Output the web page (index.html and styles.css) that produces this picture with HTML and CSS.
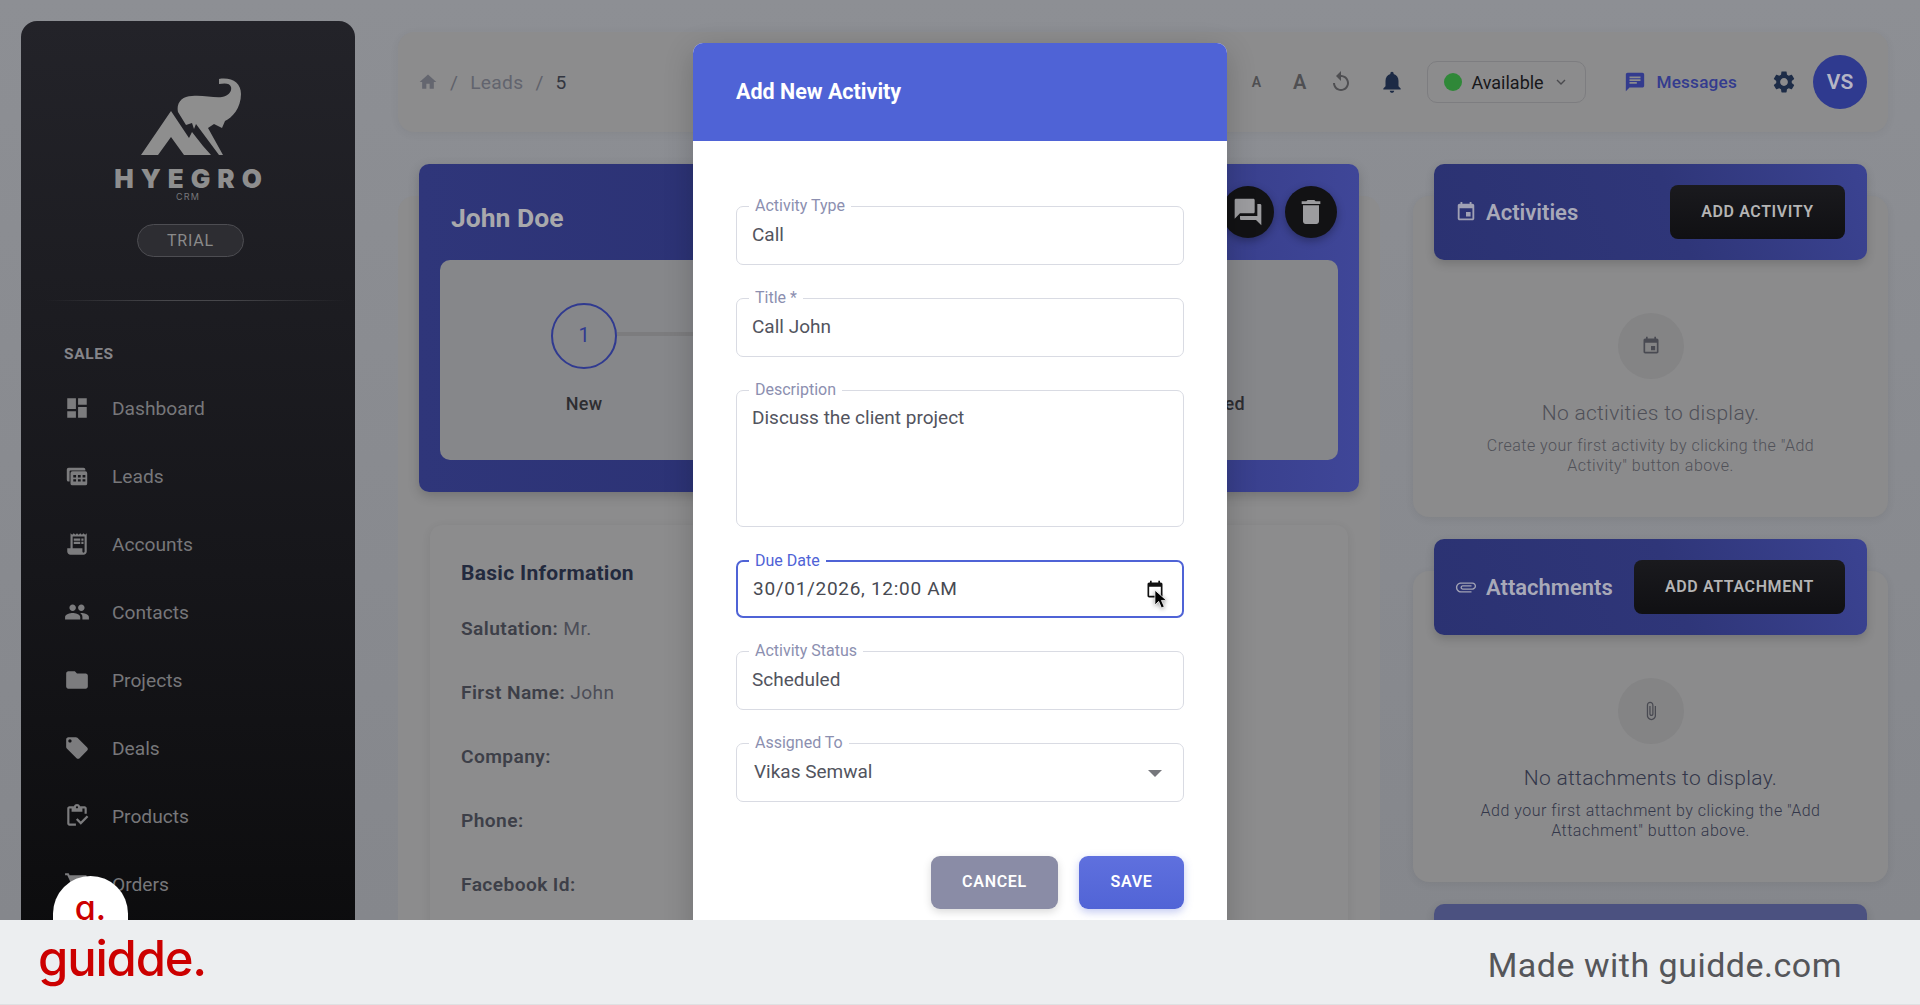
FILE: index.html
```html
<!DOCTYPE html>
<html lang="en">
<head>
<meta charset="utf-8">
<title>Add New Activity</title>
<link rel="stylesheet" href="styles.css">
</head>
<body>
<div class="app">
  <aside class="sidebar">
    <svg class="logo-mark" viewBox="140 78 102 78"><path d="M141 155 171 111 189 138 192 132 203 146 211 155H184L171 137 158 155Z"/><path d="M178 112C176 103 182 96 192 96 203 95 214 98 222 97 229 96 232 91 231 87 230 83 225 83 219 84L219 79C232 77 241 83 241 94 241 108 232 118 225 121L222 128 214 124 208 128 223 155H219L196 124 194 129 192 123 186 125Z"/></svg>
    <div class="logo-name">HYEGRO</div>
    <div class="logo-sub">CRM</div>
    <div class="trial">TRIAL</div>
    <div class="divider"></div>
    <div class="nav-head">SALES</div>
    <nav class="nav">
      <a class="nav-item"><svg viewBox="0 0 24 24"><path d="M3 13h8V3H3v10zm0 8h8v-6H3v6zm10 0h8V11h-8v10zm0-18v6h8V3h-8z"/></svg><span>Dashboard</span></a>
      <a class="nav-item"><svg viewBox="-2 -2 28 28"><path d="M4 3h15a2 2 0 0 1 2 2v1H5a1 1 0 0 0-1 1v11H3a2 2 0 0 1-2-2V5a2 2 0 0 1 2-2z"/><path fill-rule="evenodd" d="M7 7h14a2 2 0 0 1 2 2v11a2 2 0 0 1-2 2H7a2 2 0 0 1-2-2V9a2 2 0 0 1 2-2zm1 4v2.500h3V11H8zm5 0v2.500h3V11h-3zm5 0v2.500h3V11h-3zM8 15.500V18h3v-2.500H8zm5 0V18h3v-2.500h-3zm5 0V18h3v-2.500h-3z"/></svg><span>Leads</span></a>
      <a class="nav-item"><svg viewBox="0 0 24 24"><path d="M19.500 3.500 18 2l-1.500 1.500L15 2l-1.500 1.500L12 2l-1.500 1.500L9 2 7.500 3.500 6 2v14H3v3c0 1.660 1.340 3 3 3h12c1.660 0 3-1.340 3-3V2l-1.500 1.500zM19 19c0 .550-.450 1-1 1s-1-.450-1-1v-3H8V5h11v14z"/><path d="M9 7h6v2H9zm7 0h2v2h-2zm-7 3h6v2H9zm7 0h2v2h-2z"/></svg><span>Accounts</span></a>
      <a class="nav-item"><svg viewBox="0 0 24 24"><path d="M16 11c1.660 0 2.990-1.340 2.990-3S17.660 5 16 5c-1.660 0-3 1.340-3 3s1.340 3 3 3zm-8 0c1.660 0 2.990-1.340 2.990-3S9.660 5 8 5C6.340 5 5 6.340 5 8s1.340 3 3 3zm0 2c-2.330 0-7 1.170-7 3.500V19h14v-2.500c0-2.330-4.670-3.500-7-3.500zm8 0c-.290 0-.620.020-.970.050 1.160.840 1.970 1.970 1.970 3.450V19h6v-2.500c0-2.330-4.670-3.500-7-3.500z"/></svg><span>Contacts</span></a>
      <a class="nav-item"><svg viewBox="0 0 24 24"><path d="M10 4H4c-1.100 0-1.990.900-1.990 2L2 18c0 1.100.900 2 2 2h16c1.100 0 2-.900 2-2V8c0-1.100-.900-2-2-2h-8l-2-2z"/></svg><span>Projects</span></a>
      <a class="nav-item"><svg viewBox="0 0 24 24"><path d="M21.410 11.580l-9-9C12.050 2.220 11.550 2 11 2H4c-1.100 0-2 .900-2 2v7c0 .550.220 1.050.590 1.420l9 9c.360.360.860.580 1.410.580.550 0 1.050-.220 1.410-.590l7-7c.370-.360.590-.860.590-1.410 0-.550-.230-1.060-.590-1.420zM5.500 7C4.670 7 4 6.330 4 5.500S4.670 4 5.500 4 7 4.670 7 5.500 6.330 7 5.500 7z"/></svg><span>Deals</span></a>
      <a class="nav-item"><svg viewBox="0 0 24 24"><path d="M5 5h2v3h10V5h2v5h2V5c0-1.100-.900-2-2-2h-4.180C14.400 1.840 13.300 1 12 1s-2.400.840-2.820 2H5c-1.100 0-2 .900-2 2v14c0 1.100.900 2 2 2h6v-2H5V5zm7-2c.550 0 1 .450 1 1s-.450 1-1 1-1-.450-1-1 .450-1 1-1z"/><path d="M21 11.500 15.510 17l-3.010-3-1.500 1.500 4.510 4.500 6.990-7z"/></svg><span>Products</span></a>
      <a class="nav-item"><svg viewBox="0 0 24 24"><path d="M7 18c-1.100 0-1.990.900-1.990 2S5.900 22 7 22s2-.900 2-2-.900-2-2-2zM1 2v2h2l3.600 7.590-1.350 2.450c-.160.280-.250.610-.250.960 0 1.100.900 2 2 2h12v-2H7.420c-.140 0-.250-.110-.250-.250l.030-.120.900-1.630h7.450c.750 0 1.410-.410 1.750-1.030l3.580-6.490c.080-.140.120-.310.120-.480 0-.550-.450-1-1-1H5.210l-.940-2H1zm16 16c-1.100 0-1.990.900-1.990 2s.890 2 1.990 2 2-.900 2-2-.900-2-2-2z"/></svg><span>Orders</span></a>
    </nav>
  </aside>

  <main class="content">
    <header class="topbar">
      <div class="crumbs">
        <svg class="crumb-home" viewBox="0 0 24 24"><path d="M10 20v-6h4v6h5v-8h3L12 3 2 12h3v8z"/></svg>
        <span class="crumb-sep">/</span><span class="crumb-link">Leads</span><span class="crumb-sep">/</span><span class="crumb-cur">5</span>
      </div>
      <div class="tools">
        <span class="font-a small">A</span>
        <span class="font-a big">A</span>
        <svg class="tool-icon replay" viewBox="0 0 24 24"><path d="M12 5V1L7 6l5 5V7c3.310 0 6 2.690 6 6s-2.690 6-6 6-6-2.690-6-6H4c0 4.420 3.580 8 8 8s8-3.580 8-8-3.580-8-8-8z"/></svg>
        <svg class="tool-icon bell" viewBox="0 0 24 24"><path d="M12 22c1.100 0 2-.900 2-2h-4c0 1.100.890 2 2 2zm6-6v-5c0-3.070-1.640-5.640-4.500-6.320V4c0-.830-.670-1.500-1.500-1.500s-1.500.670-1.500 1.500v.680C7.630 5.360 6 7.920 6 11v5l-2 2v1h16v-1l-2-2z"/></svg>
        <div class="status"><i class="dot"></i><span>Available</span><svg class="chev" viewBox="0 0 24 24"><path d="M6 9l6 6 6-6" fill="none" stroke="currentColor" stroke-width="2"/></svg></div>
        <div class="messages"><svg viewBox="0 0 24 24"><path d="M20 2H4c-1.100 0-1.990.900-1.990 2L2 22l4-4h14c1.100 0 2-.900 2-2V4c0-1.100-.900-2-2-2zM6 9h12v2H6V9zm8 5H6v-2h8v2zm4-6H6V6h12v2z"/></svg><span>Messages</span></div>
        <svg class="tool-icon gear" viewBox="0 0 24 24"><path d="M19.140 12.940c.040-.300.060-.610.060-.940 0-.320-.020-.640-.070-.940l2.030-1.580c.180-.140.230-.410.120-.610l-1.920-3.320c-.120-.220-.370-.290-.590-.220l-2.390.960c-.500-.380-1.030-.700-1.620-.940l-.360-2.540c-.040-.240-.240-.410-.480-.410h-3.840c-.240 0-.430.170-.470.410l-.360 2.540c-.590.240-1.130.570-1.620.940l-2.390-.960c-.220-.080-.470 0-.590.220L2.740 8.870c-.120.210-.080.470.120.610l2.030 1.580c-.050.300-.090.630-.090.940s.020.640.070.940l-2.030 1.580c-.180.140-.230.410-.120.610l1.920 3.320c.120.220.370.290.590.220l2.390-.960c.500.380 1.030.700 1.620.940l.360 2.540c.050.240.240.410.480.410h3.840c.240 0 .440-.170.470-.410l.360-2.540c.590-.240 1.130-.560 1.620-.940l2.390.960c.220.080.470 0 .590-.220l1.920-3.320c.120-.220.070-.470-.120-.610l-2.010-1.580zM12 15.600c-1.980 0-3.600-1.620-3.600-3.600s1.620-3.600 3.600-3.600 3.600 1.620 3.600 3.600-1.620 3.600-3.600 3.600z"/></svg>
        <div class="avatar">VS</div>
      </div>
    </header>

    <div class="columns">
      <section class="lead-card">
        <div class="lead-head">
          <div class="lead-title">
            <h1>John Doe</h1>
            <div class="lead-actions">
              <span class="round"><svg viewBox="0 0 24 24"><path d="M21 6h-2v9H6v2c0 .550.450 1 1 1h11l4 4V7c0-.550-.450-1-1-1zm-4 6V3c0-.550-.450-1-1-1H3c-.550 0-1 .450-1 1v14l4-4h10c.550 0 1-.450 1-1z"/></svg></span>
              <span class="round"><svg viewBox="0 0 24 24"><path d="M6 19c0 1.100.900 2 2 2h8c1.100 0 2-.900 2-2V7H6v12zM19 4h-3.500l-1-1h-5l-1 1H5v2h14V4z"/></svg></span>
            </div>
          </div>
          <div class="stepper">
            <div class="step"><div class="step-num">1</div><div class="step-label">New</div></div>
            <div class="step-line"></div>
            <div class="step end"><div class="step-label">Closed</div></div>
          </div>
        </div>
        <div class="info-card">
          <h2>Basic Information</h2>
          <p><b>Salutation:</b> Mr.</p>
          <p><b>First Name:</b> John</p>
          <p><b>Company:</b></p>
          <p><b>Phone:</b></p>
          <p><b>Facebook Id:</b></p>
        </div>
      </section>

      <section class="side">
        <div class="panel first">
          <div class="panel-head">
            <div class="panel-title"><svg viewBox="0 0 24 24"><path d="M17 12h-5v5h5v-5zM16 1v2H8V1H6v2H5c-1.110 0-1.990.900-1.990 2L3 19c0 1.100.890 2 2 2h14c1.100 0 2-.900 2-2V5c0-1.100-.900-2-2-2h-1V1h-2zm3 18H5V8h14v11z"/></svg><span>Activities</span></div>
            <button class="dark-btn wide-a">ADD ACTIVITY</button>
          </div>
          <div class="empty">
            <div class="empty-icon"><svg viewBox="0 0 24 24"><path d="M17 12h-5v5h5v-5zM16 1v2H8V1H6v2H5c-1.110 0-1.990.900-1.990 2L3 19c0 1.100.890 2 2 2h14c1.100 0 2-.900 2-2V5c0-1.100-.900-2-2-2h-1V1h-2zm3 18H5V8h14v11z"/></svg></div>
            <h3>No activities to display.</h3>
            <p>Create your first activity by clicking the "Add Activity" button above.</p>
          </div>
        </div>
        <div class="panel second">
          <div class="panel-head">
            <div class="panel-title"><svg class="clip-h" viewBox="0 0 24 24"><path d="M16.500 6v11.500c0 2.210-1.790 4-4 4s-4-1.790-4-4V5c0-1.380 1.120-2.500 2.500-2.500s2.500 1.120 2.500 2.500v10.500c0 .550-.450 1-1 1s-1-.450-1-1V6H10v9.500c0 1.380 1.120 2.500 2.500 2.500s2.500-1.120 2.500-2.500V5c0-2.210-1.790-4-4-4S7 2.790 7 5v12.500c0 3.040 2.460 5.500 5.500 5.500s5.500-2.460 5.500-5.500V6h-1.500z"/></svg><span>Attachments</span></div>
            <button class="dark-btn wide-b">ADD ATTACHMENT</button>
          </div>
          <div class="empty">
            <div class="empty-icon"><svg viewBox="0 0 24 24"><path d="M16.500 6v11.500c0 2.210-1.790 4-4 4s-4-1.790-4-4V5c0-1.380 1.120-2.500 2.500-2.500s2.500 1.120 2.500 2.500v10.500c0 .550-.450 1-1 1s-1-.450-1-1V6H10v9.500c0 1.380 1.120 2.500 2.500 2.500s2.500-1.120 2.500-2.500V5c0-2.210-1.790-4-4-4S7 2.790 7 5v12.500c0 3.040 2.460 5.500 5.500 5.500s5.500-2.460 5.500-5.500V6h-1.500z"/></svg></div>
            <h3 class="strong">No attachments to display.</h3>
            <p class="strong">Add your first attachment by clicking the "Add Attachment" button above.</p>
          </div>
        </div>
        <div class="panel third"><div class="panel-head faded"></div></div>
      </section>
    </div>
  </main>

  <div class="modal">
    <div class="modal-head">Add New Activity</div>
    <div class="modal-body">
      <div class="field"><label>Activity Type</label><div class="value">Call</div></div>
      <div class="field"><label>Title *</label><div class="value">Call John</div></div>
      <div class="field area"><label>Description</label><div class="value">Discuss the client project</div></div>
      <div class="field focus"><label>Due Date</label><div class="value date">30/01/2026, 12:00 AM</div>
        <svg class="cal" viewBox="0 0 24 24"><path d="M16 1v2H8V1H6v2H5c-1.110 0-1.990.900-1.990 2L3 19c0 1.100.890 2 2 2h14c1.100 0 2-.900 2-2V5c0-1.100-.900-2-2-2h-1V1h-2zm3 18H5V8h14v11z"/></svg>
        <svg class="cursor" viewBox="0 0 14 22"><path d="M1 1v16l4-4 3 7 3-1.300-3-6.700h5.500z" stroke="#fff" stroke-width=".8"/></svg>
      </div>
      <div class="field"><label>Activity Status</label><div class="value">Scheduled</div></div>
      <div class="field select"><label>Assigned To</label><div class="value sel">Vikas Semwal</div><i class="caret"></i></div>
      <div class="modal-actions">
        <button class="btn cancel">CANCEL</button>
        <button class="btn save">SAVE</button>
      </div>
    </div>
  </div>
</div>

<footer class="footer">
  <div class="bubble"><span>a.</span></div>
  <div class="brand">guidde.</div>
  <div class="made">Made with guidde.com</div>
</footer>
</body>
</html>
```
FILE: styles.css
```css
* { box-sizing: border-box; }
html, body { margin: 0; height: 100%; }
body {
  width: 1920px;
  height: 1005px;
  overflow: hidden;
  font-family: Roboto, "Liberation Sans", sans-serif;
  background: #eceef0;
}
h1, h2, h3, p { margin: 0; }

.app {
  position: relative;
  display: flex;
  height: 920px;
  overflow: hidden;
  background: linear-gradient(180deg, #8d8f94 0%, #85878c 100%);
}

/* sidebar */
.sidebar {
  flex: none;
  width: 334px;
  height: 1000px;
  margin: 21px 0 0 21px;
  padding-top: 57px;
  border-radius: 16px;
  background: linear-gradient(180deg, #232329 0%, #16161a 55%, #0a0a0b 100%);
  display: flex;
  flex-direction: column;
  align-items: center;
}
.logo-mark { display: block; width: 102px; height: 78px; fill: #8e8e8e; margin-left: 6px; }
.logo-name {
  margin-top: 8px;
  font: 900 26px/30px Inter, "Liberation Sans", sans-serif;
  letter-spacing: 7px;
  color: #8e8e8e;
  padding-left: 7px;
}
.logo-sub {
  margin-top: -3px;
  font: 400 9px/12px Inter, sans-serif;
  letter-spacing: 1.2px;
  color: #77777a;
}
.trial {
  margin: 21px 0 0 5px;
  width: 107px;
  height: 33px;
  border: 1px solid #4d4d52;
  border-radius: 17px;
  background: #2d2d32;
  color: #8a8a8a;
  font-size: 16px;
  line-height: 31px;
  text-align: center;
  letter-spacing: .8px;
}
.divider {
  align-self: flex-start;
  margin: 43px 0 0 23px;
  width: 303px;
  height: 1px;
  background: linear-gradient(90deg, transparent, #47474b 40%, #47474b 60%, transparent);
}
.nav-head {
  align-self: flex-start;
  margin: 44px 0 0 43px;
  font-size: 15.5px;
  line-height: 18px;
  font-weight: 700;
  letter-spacing: .6px;
  color: #85858a;
}
.nav { align-self: stretch; margin-top: 11px; }
.nav-item {
  display: flex;
  align-items: center;
  height: 68px;
  padding-left: 42px;
  gap: 21px;
  color: #77777a;
  font-size: 19.2px;
}
.nav-item svg { flex: none; width: 28px; height: 28px; fill: #7c7c7e; padding: 1px; }

/* main */
.content { flex: none; width: 1490px; margin: 32px 0 0 43px; }
.topbar {
  display: flex;
  align-items: center;
  justify-content: space-between;
  height: 100px;
  padding: 0 21px 0 20px;
  border-radius: 16px;
  background: #8c8c8d;
  box-shadow: 0 2px 10px rgba(0,0,0,.05);
}
.crumbs { display: flex; align-items: center; font-size: 19.2px; letter-spacing: .3px; }
.crumb-home { width: 20px; height: 20px; fill: #64666f; margin-right: 12px; }
.crumb-sep { color: #5f616a; margin-right: 12px; }
.crumb-link { color: #62646e; margin-right: 12px; }
.crumb-cur { color: #333640; }
.tools { display: flex; align-items: center; }
.font-a { font-weight: 600; color: #4f4f52; }
.font-a.small { font-size: 14px; margin-right: 32px; }
.font-a.big { font-size: 20px; margin-right: 23px; }
.tool-icon { width: 24px; height: 24px; }
.replay { fill: #4f4f52; margin-right: 26px; }
.bell { fill: #1c2a45; width: 26px; height: 26px; margin-right: 22px; }
.status {
  display: flex;
  align-items: center;
  width: 159px;
  height: 42px;
  padding-left: 16px;
  border: 1.5px solid #7d7d80;
  border-radius: 10px;
  font-size: 18px;
  color: #17171a;
}
.dot { width: 18px; height: 18px; border-radius: 50%; background: #2f8838; margin-right: 9px; }
.chev { width: 16px; height: 16px; margin-left: 9px; color: #4a4a4e; }
.messages {
  display: flex;
  align-items: center;
  margin-left: 38px;
  margin-right: 34px;
  color: #333b8e;
  font-size: 17.2px;
  font-weight: 500;
  letter-spacing: .2px;
}
.messages svg { width: 22px; height: 22px; fill: #333b8e; margin-right: 10px; }
.gear { fill: #1d2c47; width: 26px; height: 26px; margin-right: 16px; }
.avatar {
  width: 54px;
  height: 54px;
  border-radius: 50%;
  background: #2f3a8f;
  color: #b5b5c5;
  font-size: 21px;
  font-weight: 600;
  line-height: 54px;
  text-align: center;
}

.columns { display: flex; gap: 33px; margin-top: 64px; }

/* lead */
.lead-card {
  flex: none;
  width: 982px;
  height: 800px;
  padding: 0 21px;
  border-radius: 16px;
  background: #8c8c8d;
}
.lead-head {
  margin-top: -32px;
  height: 328px;
  padding: 0 21px;
  border-radius: 10px;
  background: linear-gradient(90deg, #2f367a 0%, #2a3072 55%, #3f4698 100%);
  box-shadow: 0 4px 12px rgba(0,0,0,.18);
}
.lead-title { display: flex; align-items: center; justify-content: space-between; height: 96px; padding: 0 1px 0 11px; }
.lead-title h1 { margin-top: 10px; font-size: 26.5px; font-weight: 700; color: #a9a9ac; }
.lead-actions { display: flex; gap: 11px; margin-top: -1px; }
.round {
  display: flex;
  align-items: center;
  justify-content: center;
  width: 52px;
  height: 52px;
  border-radius: 50%;
  background: #121214;
  box-shadow: 0 3px 8px rgba(0,0,0,.3);
}
.round svg { width: 32px; height: 32px; fill: #9c9c9f; }
.stepper {
  display: flex;
  align-items: flex-start;
  height: 200px;
  padding: 43px 93px 0 111px;
  border-radius: 10px;
  background: #86878a;
}
.step { flex: none; text-align: center; width: 66px; }
.step.end { width: 60px; text-align: right; padding-top: 90px; }
.step-num {
  width: 66px;
  height: 66px;
  border: 2.5px solid #303a90;
  border-radius: 50%;
  color: #303a90;
  font-size: 20px;
  line-height: 61px;
}
.step-label { margin-top: 24px; font-size: 18px; font-weight: 500; letter-spacing: .3px; color: #2d2d31; white-space: nowrap; }
.step.end .step-label { margin-top: 0; }
.step-line { flex: 1; height: 4px; margin-top: 29px; background: #7c7c7e; }
.info-card {
  margin: 33px 11px 0;
  height: 500px;
  padding: 36px 31px;
  border-radius: 12px;
  background: #8c8c8d;
  box-shadow: 0 2px 10px rgba(0,0,0,.08);
  color: #4c4e58;
  font-size: 19.2px;
  letter-spacing: .4px;
}
.info-card h2 { font-size: 21px; line-height: 24px; font-weight: 700; letter-spacing: .3px; color: #232a3e; margin-bottom: 32px; }
.info-card p { height: 64px; line-height: 24px; }
.info-card b { font-weight: 600; color: #3d3f48; }

/* right */
.side { flex: none; width: 475px; display: flex; flex-direction: column; gap: 54px; }
.panel { padding: 0 21px; border-radius: 16px; background: #8b8b8c; box-shadow: 0 2px 8px rgba(0,0,0,.07); }
.panel.first { height: 321px; }
.panel.second { height: 311px; }
.panel.third { height: 200px; }
.panel-head {
  display: flex;
  align-items: center;
  justify-content: space-between;
  height: 96px;
  padding: 0 22px 0 21px;
  position: relative;
  top: -32px;
  margin-bottom: -32px;
  border-radius: 10px;
  background: linear-gradient(70deg, #2b3272 0%, #2f3679 55%, #3b4392 100%);
  box-shadow: 0 4px 10px rgba(0,0,0,.16);
}
.panel-head.faded { background: #4b5180; }
.panel-title { display: flex; align-items: center; gap: 9px; color: #a8a9b8; font-size: 22px; font-weight: 600; }
.panel-title svg { width: 22px; height: 22px; fill: #a0a1b4; }
.panel-title .clip-h { transform: rotate(90deg); }
.dark-btn {
  height: 54px;
  border: 0;
  border-radius: 8px;
  background: linear-gradient(180deg, #1a1a1e 0%, #101013 100%);
  color: #b4b4b4;
  font: 600 16px/1 Roboto, sans-serif;
  letter-spacing: .6px;
}
.wide-a { width: 175px; }
.wide-b { width: 211px; }
.empty { text-align: center; color: #55565c; }
.first .empty { padding-top: 53px; }
.second .empty { padding-top: 43px; }
.empty-icon {
  display: flex;
  align-items: center;
  justify-content: center;
  width: 66px;
  height: 66px;
  margin: 0 auto;
  border-radius: 50%;
  background: #848485;
}
.empty-icon svg { width: 20px; height: 20px; fill: #494a52; }
.empty h3 { margin-top: 20px; font-size: 21px; line-height: 28px; font-weight: 300; letter-spacing: .3px; color: #4f5058; }
.empty p { width: 350px; margin: 9px auto 0; font-size: 16px; line-height: 20px; font-weight: 300; letter-spacing: .5px; color: #505158; }
.empty .strong { color: #33374a; }

/* modal */
.modal {
  position: absolute;
  left: 693px;
  top: 43px;
  width: 534px;
  height: 900px;
  border-radius: 10px 10px 0 0;
  background: #fff;
  box-shadow: 0 8px 30px rgba(0,0,0,.2);
}
.modal-head {
  height: 98px;
  padding-left: 43px;
  border-radius: 10px 10px 0 0;
  background: #4f63d6;
  color: #fff;
  font-size: 21.5px;
  font-weight: 700;
  line-height: 98px;
}
.modal-body { display: flex; flex-direction: column; gap: 33px; padding: 65px 43px 0; }
.field {
  position: relative;
  height: 59px;
  border: 1.5px solid #d9dbe3;
  border-radius: 7px;
  background: #fff;
}
.field.area { height: 137px; }
.field.focus { height: 58px; border: 2.5px solid #4f63d6; }
.field label {
  position: absolute;
  left: 12px;
  top: -10px;
  padding: 0 6px;
  background: #fff;
  color: #8c8fb0;
  font-size: 16px;
  line-height: 17px;
}
.field.focus label { top: -10px; left: 11px; color: #4f63d6; }
.value { padding: 16px 0 0 15px; font-size: 19px; line-height: 24px; color: #52545e; }
.area .value { padding-top: 15px; }
.value.date { padding: 14.5px 0 0 15px; letter-spacing: .7px; color: #484a52; }
.value.sel { padding-left: 17px; }
.cal { position: absolute; right: 17px; top: 18px; width: 20px; height: 20px; fill: #111; }
.cursor { position: absolute; right: 15px; top: 27px; width: 13px; height: 21px; fill: #000; filter: drop-shadow(0 1px 2px rgba(0,0,0,.4)); }
.caret {
  position: absolute;
  right: 21px;
  top: 26px;
  border-left: 7px solid transparent;
  border-right: 7px solid transparent;
  border-top: 7px solid #76777c;
}
.modal-actions { display: flex; justify-content: flex-end; gap: 21px; margin-top: 21px; }
.btn {
  height: 53px;
  padding: 0 0 2px;
  border: 0;
  border-radius: 9px;
  color: #fff;
  font: 600 16px/1 Roboto, sans-serif;
  letter-spacing: .7px;
}
.cancel { width: 127px; background: #8a8ca6; box-shadow: 0 3px 8px rgba(0,0,0,.15); }
.save { width: 105px; background: linear-gradient(180deg, #5f70de, #5164d6); box-shadow: 0 3px 8px rgba(79,99,214,.35); }

/* recorder bubble and footer */
.footer {
  position: relative;
  display: flex;
  align-items: center;
  justify-content: space-between;
  height: 85px;
  padding: 0 78px 0 38px;
  background: #eceef0;
  border-bottom: 1px solid #dfe0e2;
}
.bubble {
  position: absolute;
  left: 53px;
  bottom: 100%;
  width: 75px;
  height: 44px;
  padding-top: 20px;
  border-radius: 37.5px 37.5px 0 0;
  background: #fff;
  color: #cc0000;
  text-align: center;
  font: 500 34px/24px Inter, sans-serif;
  font-feature-settings: "cv11";
}
.bubble span { display: block; height: 24px; }
.brand {
  color: #cc0000;
  font: 500 49px/60px Inter, sans-serif;
  font-feature-settings: "cv11";
  letter-spacing: -1.200px;
  margin-top: -6px;
}
.made { color: #55565a; font-size: 34px; line-height: 40px; letter-spacing: .5px; margin-top: 5px; }
```
